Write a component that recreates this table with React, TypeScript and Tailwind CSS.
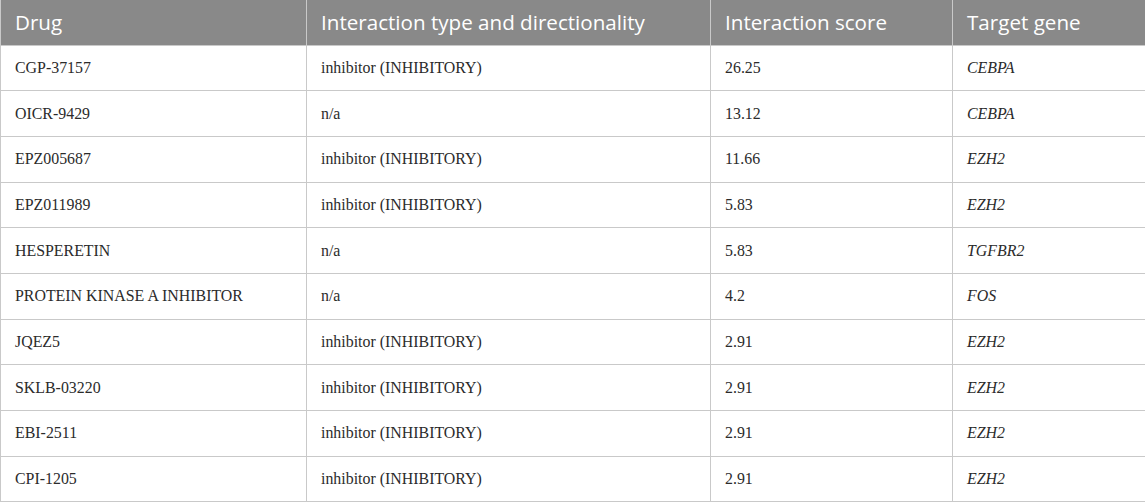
const rows: Array<[string, string, string, string]> = [
  ["CGP-37157", "inhibitor (INHIBITORY)", "26.25", "CEBPA"],
  ["OICR-9429", "n/a", "13.12", "CEBPA"],
  ["EPZ005687", "inhibitor (INHIBITORY)", "11.66", "EZH2"],
  ["EPZ011989", "inhibitor (INHIBITORY)", "5.83", "EZH2"],
  ["HESPERETIN", "n/a", "5.83", "TGFBR2"],
  ["PROTEIN KINASE A INHIBITOR", "n/a", "4.2", "FOS"],
  ["JQEZ5", "inhibitor (INHIBITORY)", "2.91", "EZH2"],
  ["SKLB-03220", "inhibitor (INHIBITORY)", "2.91", "EZH2"],
  ["EBI-2511", "inhibitor (INHIBITORY)", "2.91", "EZH2"],
  ["CPI-1205", "inhibitor (INHIBITORY)", "2.91", "EZH2"],
];

const headers = ["Drug", "Interaction type and directionality", "Interaction score", "Target gene"];

export default function App() {
  return (
    <div className="w-[1145px] h-[502px] bg-white overflow-hidden">
      <table className="w-[1145px] table-fixed border-collapse">
        <colgroup>
          <col className="w-[306px]" />
          <col className="w-[404px]" />
          <col className="w-[242px]" />
          <col className="w-[193px]" />
        </colgroup>
        <thead>
          <tr className="h-[45px] bg-[#898989]">
            {headers.map((h) => (
              <th
                key={h}
                className="border-x border-[#c9c9c9] px-[14px] text-left font-normal text-[20.6px] text-white font-['Open_Sans',sans-serif]"
              >
                {h}
              </th>
            ))}
          </tr>
        </thead>
        <tbody>
          {rows.map((r, i) => (
            <tr key={i} className="h-[45.7px]">
              {r.map((c, j) => (
                <td
                  key={j}
                  className={
                    "border border-[#c9c9c9] px-[14px] text-[15.9px] text-[#2b2b2b] font-['Liberation_Serif',serif]" +
                    (j === 3 ? " italic" : "")
                  }
                >
                  {c}
                </td>
              ))}
            </tr>
          ))}
        </tbody>
      </table>
    </div>
  );
}
